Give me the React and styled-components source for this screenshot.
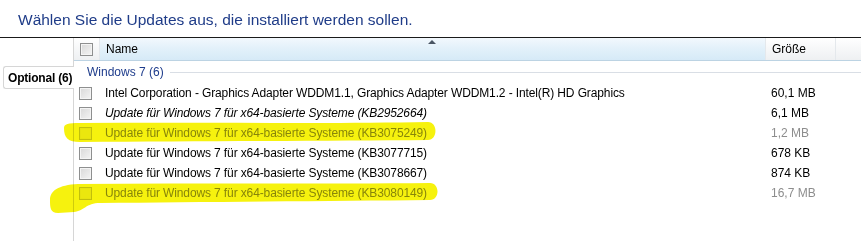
import React from 'react';
import styled, { createGlobalStyle } from 'styled-components';

const GlobalStyle = createGlobalStyle`
    html, body {
        margin: 0;
        background: #ffffff;
    }
    body {
        font-family: "Liberation Sans", Arial, sans-serif;
        font-size: 12px;
        color: #000;
    }
`

const updates = [
    { name: 'Intel Corporation - Graphics Adapter WDDM1.1, Graphics Adapter WDDM1.2 - Intel(R) HD Graphics', size: '60,1 MB' },
    { name: 'Update für Windows 7 für x64-basierte Systeme (KB2952664)', size: '6,1 MB', italic: true },
    { name: 'Update für Windows 7 für x64-basierte Systeme (KB3075249)', size: '1,2 MB', disabled: true },
    { name: 'Update für Windows 7 für x64-basierte Systeme (KB3077715)', size: '678 KB' },
    { name: 'Update für Windows 7 für x64-basierte Systeme (KB3078667)', size: '874 KB' },
    { name: 'Update für Windows 7 für x64-basierte Systeme (KB3080149)', size: '16,7 MB', disabled: true },
]

function App() {
    return (
        <Page>
            <GlobalStyle />
            <Title>Wählen Sie die Updates aus, die installiert werden sollen.</Title>
            <Body>
                <Sidebar>
                    <Tab>Optional (6)</Tab>
                </Sidebar>
                <List>
                    <Header>
                        <HeadCell>
                            <CheckBox />
                        </HeadCell>
                        <HeadCell sorted>
                            Name
                            <SortArrow />
                        </HeadCell>
                        <HeadCell>Größe</HeadCell>
                        <HeadCell last />
                    </Header>
                    <Group>
                        <span>Windows 7 (6)</span>
                        <GroupLine />
                    </Group>
                    {updates.map((u, i) => (
                        <Row key={i} disabled={u.disabled}>
                            <CheckCell>
                                <CheckBox disabled={u.disabled} />
                            </CheckCell>
                            <NameCell italic={u.italic}>{u.name}</NameCell>
                            <SizeCell>{u.size}</SizeCell>
                        </Row>
                    ))}
                </List>
            </Body>
            {/* highlighter strokes drawn over the screenshot */}
            <Marker viewBox="0 0 861 241">
                <path d="M64 128 C 64 124, 68 123, 80 123 C 200 122, 330 124, 428 122 C 438 122, 438 140, 428 140 C 330 141, 200 141, 80 142 C 68 142, 64 138, 64 128 Z" />
                <path d="M50 200 C 50 191, 58 185, 78 184 C 200 183, 330 184, 430 183 C 440 183, 440 200, 430 200 C 330 201, 200 202, 100 203 C 86 203, 84 211, 74 212 L 58 213 C 50 213, 50 207, 50 200 Z" />
            </Marker>
        </Page>
    )
}

const Page = styled.div`
    position: relative;
    width: 861px;
    height: 241px;
    overflow: hidden;
    display: flex;
    flex-direction: column;
`

const Title = styled.div`
    height: 38px;
    padding: 2px 0 0 18px;
    display: flex;
    align-items: center;
    font-size: 15.5px;
    color: #1f3c88;
    border-bottom: 1px solid #1a1a1a;
    box-sizing: border-box;
`

const Body = styled.div`
    flex: 1;
    display: flex;
`

const Sidebar = styled.div`
    width: 73px;
    border-right: 1px solid #d6d6d6;
    padding-top: 28px;
    position: relative;
`

const Tab = styled.div`
    margin-left: 3px;
    margin-right: -1px;
    height: 21px;
    padding-left: 4px;
    display: flex;
    align-items: center;
    white-space: nowrap;
    font-size: 12px;
    letter-spacing: -0.2px;
    font-weight: bold;
    background: #fff;
    border: 1px solid #d6d6d6;
    border-right: none;
    border-radius: 3px 0 0 3px;
    position: relative;
`

const List = styled.div`
    flex: 1;
    display: flex;
    flex-direction: column;
`

const Header = styled.div`
    height: 22px;
    display: grid;
    grid-template-columns: 26px 666px 70px 1fr;
    border-bottom: 1px solid #bcd3e3;
`

const HeadCell = styled.div`
    position: relative;
    display: flex;
    align-items: center;
    padding-left: 6px;
    background: ${p => p.sorted
        ? 'linear-gradient(#f2f8fd, #e3f1fa 45%, #d6eaf7)'
        : 'linear-gradient(#ffffff, #f7f8f9 45%, #eef0f2)'};
    border-right: ${p => p.last ? 'none' : '1px solid #e4e8ec'};
    box-sizing: border-box;
`

const SortArrow = styled.div`
    position: absolute;
    top: 2px;
    left: 328px;
    width: 0;
    height: 0;
    border-left: 4px solid transparent;
    border-right: 4px solid transparent;
    border-bottom: 4px solid #4a5563;
`

const Group = styled.div`
    height: 22px;
    display: flex;
    align-items: center;
    gap: 6px;
    padding-left: 13px;
    color: #1e3c8c;
`

const GroupLine = styled.div`
    flex: 1;
    height: 1px;
    background: #d9dee5;
    margin-top: 1px;
`

const Row = styled.div`
    height: 20px;
    display: grid;
    grid-template-columns: 31px 666px 1fr;
    align-items: center;
    color: ${p => p.disabled ? '#8d8d8d' : '#000'};
`

const CheckCell = styled.div`
    display: flex;
    align-items: center;
    padding-left: 5px;
`

const CheckBox = styled.div`
    width: 13px;
    height: 13px;
    box-sizing: border-box;
    border: 1px solid ${p => p.disabled ? '#c9c9c9' : '#8e8f8f'};
    background: ${p => p.disabled
        ? '#f4f4f4'
        : 'linear-gradient(135deg, #d8d8d8, #f4f4f4)'};
    box-shadow: inset 0 0 0 1px ${p => p.disabled ? '#f0f0f0' : '#f4f4f4'};
`

const NameCell = styled.div`
    font-style: ${p => p.italic ? 'italic' : 'normal'};
    letter-spacing: -0.12px;
    white-space: nowrap;
`

const SizeCell = styled.div`
    white-space: nowrap;
`

const Marker = styled.svg`
    position: absolute;
    inset: 0;
    width: 861px;
    height: 241px;
    pointer-events: none;
    mix-blend-mode: multiply;
    path {
        fill: #f6f20e;
    }
`

export default App;
